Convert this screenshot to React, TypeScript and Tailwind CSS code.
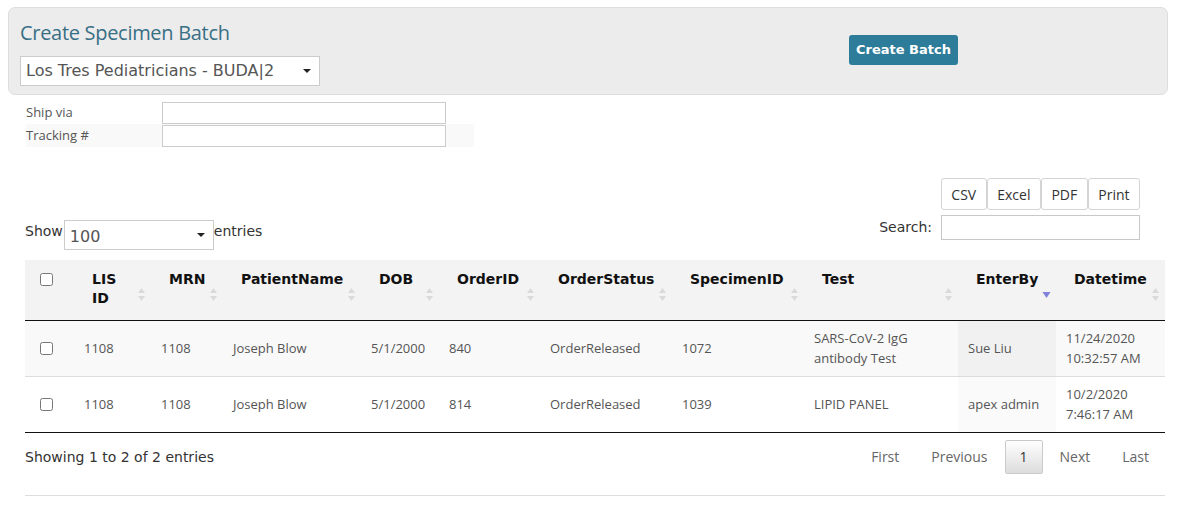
import React from 'react';

const verdana = { fontFamily: '"DejaVu Sans", Verdana, sans-serif' };
const openSans = { fontFamily: '"Open Sans", Arial, sans-serif' };

type Col = { label: string[]; w: number; sorted?: boolean };

const cols: Col[] = [
  { label: ['LIS', 'ID'], w: 77 },
  { label: ['MRN'], w: 72 },
  { label: ['PatientName'], w: 138 },
  { label: ['DOB'], w: 78 },
  { label: ['OrderID'], w: 101 },
  { label: ['OrderStatus'], w: 132 },
  { label: ['SpecimenID'], w: 132 },
  { label: ['Test'], w: 154 },
  { label: ['EnterBy'], w: 98, sorted: true },
  { label: ['Datetime'], w: 109 },
];

const rows = [
  ['1108', '1108', 'Joseph Blow', '5/1/2000', '840', 'OrderReleased', '1072', 'SARS-CoV-2 IgG antibody Test', 'Sue Liu', '11/24/2020 10:32:57 AM'],
  ['1108', '1108', 'Joseph Blow', '5/1/2000', '814', 'OrderReleased', '1039', 'LIPID PANEL', 'apex admin', '10/2/2020 7:46:17 AM'],
];

function SortIcon({ sorted }: { sorted?: boolean }) {
  if (sorted) {
    return (
      <svg width="9" height="14" viewBox="0 0 9 14" className="absolute right-[5px] top-[28px]">
        <path d="M0.5 4 L8.5 4 L4.5 10 Z" fill="#7f82d8" />
      </svg>
    );
  }
  return (
    <svg width="9" height="16" viewBox="0 0 9 16" className="absolute right-[5px] top-[27px]">
      <path d="M1 6 L8 6 L4.5 1 Z" fill="#dadada" />
      <path d="M1 9 L8 9 L4.5 14 Z" fill="#dadada" />
    </svg>
  );
}

function Caret() {
  return (
    <svg width="8" height="4" viewBox="0 0 8 4" className="absolute right-[8px] top-1/2 -translate-y-1/2">
      <path d="M0 0 L8 0 L4 4 Z" fill="#222" />
    </svg>
  );
}

export default function App() {
  return (
    <div className="w-[1177px] min-h-[509px] bg-white pt-[7px] text-[#555]" style={openSans}>
      {/* Header panel */}
      <div className="ml-[8px] w-[1160px] h-[88px] rounded-[7px] border border-[#dedede] bg-[#ececec] pl-[11px] grid grid-cols-[829px_1fr]">
        <div>
          <h1 className="mt-[12px] text-[20px] leading-[26px] text-[#386f85] tracking-[-0.3px]">Create Specimen Batch</h1>
          <div className="relative mt-[10px] w-[300px] h-[30px] bg-white border border-[#cccccc]" style={verdana}>
            <span className="block pl-[5px] leading-[28px] text-[16px] text-[#555]">Los Tres Pediatricians - BUDA|2</span>
            <Caret />
          </div>
        </div>
        <div className="pt-[27px]">
          <button className="h-[30px] px-[7px] rounded-[3px] bg-[#2d7c9a] text-white text-[13px] font-bold" style={verdana}>
            Create Batch
          </button>
        </div>
      </div>

      <div className="pl-[25px] pr-[12px]">
        {/* Shipping form */}
        <table className="mt-[6px] ml-[1px] w-[448px] border-collapse text-[13px] text-[#555]">
          <tbody>
            <tr className="h-[23px]">
              <td className="w-[136px] p-0 align-middle">Ship via</td>
              <td className="p-0 align-middle">
                <div className="w-[284px] h-[22px] border border-[#cccccc] bg-white" />
              </td>
            </tr>
            <tr className="h-[23px] bg-[#f9f9f9]">
              <td className="p-0 align-middle">Tracking #</td>
              <td className="p-0 align-middle">
                <div className="w-[284px] h-[22px] border border-[#cccccc] bg-white" />
              </td>
            </tr>
          </tbody>
        </table>

        {/* Toolbar */}
        <div className="mt-[31px] flex justify-between items-start">
          <div className="mt-[42px] flex items-start text-[14px] leading-[17px] text-[#333]" style={verdana}>
            <span className="mt-[3px]">Show</span>
            <div className="relative ml-[1px] w-[150px] h-[30px] border border-[#cccccc] bg-white">
              <span className="block pl-[5px] pt-[3px] leading-[26px] text-[16px] text-[#555]">100</span>
              <Caret />
            </div>
            <span className="mt-[3px]">entries</span>
          </div>
          <div className="mr-[25px] flex flex-col items-end">
            <div className="flex">
              {['CSV', 'Excel', 'PDF', 'Print'].map((b) => (
                <button
                  key={b}
                  className="h-[32px] px-[9.5px] rounded-[3px] border border-[#d4d4d4] bg-white text-[14px] text-[#333]"
                  style={openSans}
                >
                  {b}
                </button>
              ))}
            </div>
            <div className="mt-[5px] flex items-center gap-[9px]">
              <span className="text-[14px] text-[#333]" style={verdana}>Search:</span>
              <div className="w-[199px] h-[25px] border border-[#c8c8c8] bg-white" />
            </div>
          </div>
        </div>

        {/* Data table */}
        <table className="mt-[10px] w-[1140px] table-fixed border-collapse">
          <colgroup>
            <col style={{ width: 49 }} />
            {cols.map((c, i) => (
              <col key={i} style={{ width: c.w }} />
            ))}
          </colgroup>
          <thead>
            <tr className="h-[60px] bg-[#f3f3f3] border-b border-[#111]">
              <th className="p-0 pl-[15px] pt-[13px] align-top text-left">
                <input type="checkbox" className="w-[13px] h-[13px] m-0 block" />
              </th>
              {cols.map((c, i) => (
                <th
                  key={i}
                  className="relative p-0 pl-[18px] pr-[16px] pt-[10px] align-top text-left text-[14px] leading-[19px] font-bold text-[#111]"
                  style={verdana}
                >
                  {c.label.map((l) => (
                    <div key={l}>{l}</div>
                  ))}
                  <SortIcon sorted={c.sorted} />
                </th>
              ))}
            </tr>
          </thead>
          <tbody className="text-[13px] text-[#555]">
            {rows.map((r, ri) => (
              <tr key={ri} className={`h-[56px] ${ri === 0 ? 'bg-[#f9f9f9]' : 'bg-white border-t border-[#dddddd]'}`}>
                <td className="p-0 pl-[15px] align-middle">
                  <input type="checkbox" className="w-[13px] h-[13px] m-0 block" />
                </td>
                {r.map((v, ci) => (
                  <td
                    key={ci}
                    className={`p-0 pl-[10px] pr-[8px] align-middle leading-[20px] ${
                      ci === 8 ? (ri === 0 ? 'bg-[#f1f1f1]' : 'bg-[#fafafa]') : ''
                    }`}
                  >
                    {v}
                  </td>
                ))}
              </tr>
            ))}
          </tbody>
        </table>
        <div className="w-[1140px] border-t border-[#111]" />

        {/* Footer */}
        <div className="w-[1140px] flex justify-between items-start pt-[5px]">
          <div className="mt-[9px] text-[14px] text-[#333]" style={verdana}>Showing 1 to 2 of 2 entries</div>
          <div className="flex items-center text-[14px] text-[#666]">
            <span className="px-[16px] py-[8px]">First</span>
            <span className="px-[16px] py-[8px]">Previous</span>
            <span className="mx-[1px] w-[38px] h-[34px] flex items-center justify-center rounded-[2px] border border-[#cacaca] bg-gradient-to-b from-white to-[#dcdcdc] text-[#333]">
              1
            </span>
            <span className="px-[16px] py-[8px]">Next</span>
            <span className="px-[16px] py-[8px]">Last</span>
          </div>
        </div>
        <div className="mt-[20px] w-[1140px] border-t border-[#dddddd]" />
      </div>
    </div>
  );
}
